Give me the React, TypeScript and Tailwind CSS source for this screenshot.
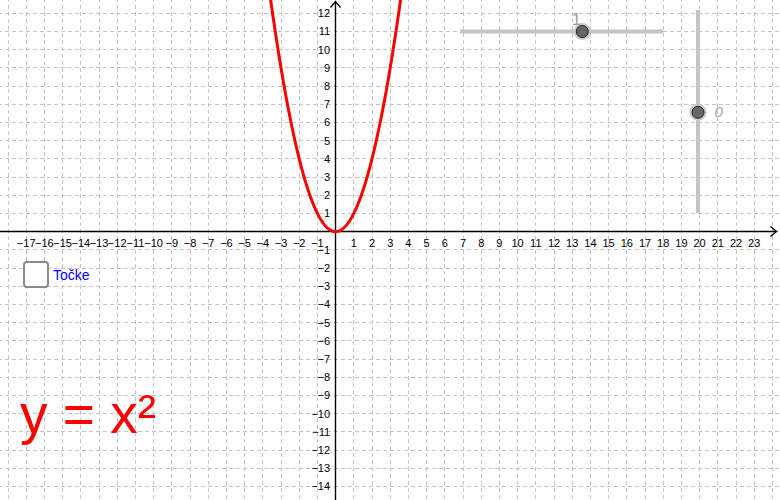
import React from "react";

const OX = 335.6;
const OY = 231.6;
const U = 18.2;
const X = (v: number) => OX + v * U;
const Y = (v: number) => OY - v * U;
const range = (a: number, b: number) => {
  const r: number[] = [];
  for (let i = a; i <= b; i++) r.push(i);
  return r;
};
const crisp = (p: number) => Math.round(p - 0.5) + 0.5;
const fmt = (n: number) => (n < 0 ? "\u2212" + Math.abs(n) : String(n));

export default function App() {
  const pts: string[] = [];
  for (let x = -3.8; x <= 3.8001; x += 0.02) {
    pts.push(`${X(x).toFixed(2)},${Y(x * x).toFixed(2)}`);
  }
  const ax = crisp(OX);
  const ay = crisp(OY);
  const font = '"Liberation Sans", Arial, sans-serif';

  return (
    <div className="relative w-[780px] h-[500px] bg-white overflow-hidden" style={{ fontFamily: font }}>
      <svg width="780" height="500" className="absolute inset-0 block">
        {/* grid */}
        <g stroke="#c4c4c4" strokeWidth="1" strokeDasharray="4 3">
          {range(-18, 24).map((i) => (
            <line key={"v" + i} x1={crisp(X(i))} y1={-2} x2={crisp(X(i))} y2={500} />
          ))}
          {range(-15, 13).map((j) => (
            <line key={"h" + j} x1={-2} y1={crisp(Y(j))} x2={780} y2={crisp(Y(j))} />
          ))}
        </g>

        {/* axes */}
        <g stroke="#000" strokeWidth="1.4" fill="none">
          <line x1={0} y1={ay} x2={776} y2={ay} />
          <line x1={ax} y1={1.5} x2={ax} y2={500} />
          <polyline points={`${770.5},${ay - 5} ${776.5},${ay} ${770.5},${ay + 5}`} strokeLinejoin="miter" />
          <polyline points={`${ax - 5},${7.5} ${ax},${1.5} ${ax + 5},${7.5}`} strokeLinejoin="miter" />
        </g>

        {/* axis labels */}
        <g fontFamily={font} fontSize="11" fill="#000">
          {range(-17, 23)
            .filter((i) => i !== 0)
            .map((i) => (
              <text key={"xl" + i} x={X(i)} y={OY + 15.5} textAnchor="middle">
                {fmt(i)}
              </text>
            ))}
          {range(-14, 12)
            .filter((j) => j !== 0)
            .map((j) => (
              <text key={"yl" + j} x={OX - 5.5} y={Y(j) + 4} textAnchor="end">
                {fmt(j)}
              </text>
            ))}
        </g>

        {/* parabola */}
        <polyline points={pts.join(" ")} fill="none" stroke="#ff0000" strokeWidth="3" strokeLinejoin="round" />

        {/* horizontal slider */}
        <line x1={460} y1={31.5} x2={663} y2={31.5} stroke="#c4c4c4" strokeWidth="4" />
        <circle cx={582.3} cy={31.5} r={8.5} fill="#c8c8c8" />
        <circle cx={582.3} cy={31.5} r={6} fill="#666666" stroke="#222" strokeWidth="1" />
        <text x={572} y={25} fontFamily={font} fontSize="16" fill="#a0a0a0">
          1
        </text>

        {/* vertical slider */}
        <line x1={698} y1={10} x2={698} y2={213} stroke="#c4c4c4" strokeWidth="4" />
        <circle cx={698} cy={112.3} r={8.5} fill="#c8c8c8" />
        <circle cx={698} cy={112.3} r={6} fill="#666666" stroke="#222" strokeWidth="1" />
        <text x={714.5} y={117} fontFamily={font} fontSize="15" fill="#a8a8a8" fontStyle="italic">
          0
        </text>

        {/* equation */}
        <text x={20} y={433} fontFamily={font} fontSize="55" fill="#ff0000">
          y = x²
        </text>
      </svg>

      {/* checkbox */}
      <div className="absolute left-[23px] top-[261px] flex items-center gap-[4px]">
        <div className="w-[26px] h-[27px] rounded-[4px] border-2 border-[#8a8a8a] bg-white" />
        <span className="text-[14px] leading-none text-[#0000ff]">Točke</span>
      </div>
    </div>
  );
}
